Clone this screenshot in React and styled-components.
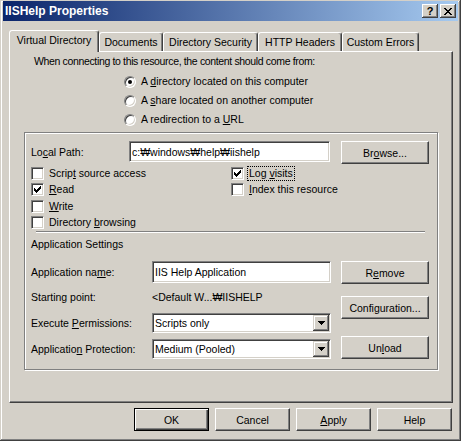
import React from 'react';
import styled, { createGlobalStyle } from 'styled-components';

const face = '#d4d0c8';
const light = '#ffffff';
const shadow = '#808080';
const dark = '#404040';

const GlobalStyle = createGlobalStyle`
  * { box-sizing: border-box; }
  html, body { margin: 0; padding: 0; background: ${face}; }
  body {
    font-family: "Liberation Sans", Arial, sans-serif;
    font-size: 10.5px;
    color: #000;
  }
`;

const Window = styled.div`
  width: 461px;
  height: 441px;
  padding: 1px 3px 3px;
  background: ${face};
  box-shadow: inset -1px -1px ${dark}, inset 1px 1px ${face}, inset -2px -2px ${shadow}, inset 2px 2px ${light};
  display: flex;
  flex-direction: column;
`;

const TitleBar = styled.div`
  height: 20px;
  display: flex;
  align-items: center;
  padding: 0 2px;
  background: linear-gradient(to right, #0a246a, #a6caf0);
  color: #fff;
  font-weight: bold;
  font-size: 12px;
`;

const TitleText = styled.span`
  flex: 1;
`;

const CaptionButton = styled.div`
  width: 16px;
  height: 14px;
  margin-left: 2px;
  background: ${face};
  box-shadow: inset -1px -1px ${dark}, inset 1px 1px ${light}, inset -2px -2px ${shadow};
  display: flex;
  align-items: center;
  justify-content: center;
  color: #000;
  font-weight: bold;
  font-size: 11px;
  line-height: 12px;
`;

const Body = styled.div`
  flex: 1;
  display: flex;
  flex-direction: column;
  padding: 9px 5px 0 6px;
`;

const TabStrip = styled.div`
  display: flex;
  align-items: flex-end;
  height: 21px;
`;

const Tab = styled.div`
  position: relative;
  z-index: ${(p) => (p.$active ? 1 : 0)};
  width: ${(p) => p.$w}px;
  height: ${(p) => (p.$active ? 22 : 19)}px;
  margin-bottom: ${(p) => (p.$active ? -1 : 0)}px;
  padding-bottom: ${(p) => (p.$active ? 3 : 0)}px;
  background: ${face};
  border: 1px solid;
  border-bottom: none;
  border-color: ${light} ${dark} transparent ${light};
  border-radius: 3px 3px 0 0;
  box-shadow: inset -1px 0 ${shadow};
  display: flex;
  align-items: center;
  justify-content: center;
  white-space: nowrap;
`;

const Panel = styled.div`
  height: 352px;
  padding-top: 3px;
  border: 1px solid;
  border-color: ${light} ${dark} ${dark} ${light};
  box-shadow: inset -1px -1px ${shadow};
  display: flex;
  flex-direction: column;
`;

const Intro = styled.div`
  margin-left: 24px;
  line-height: 13px;
  letter-spacing: -0.35px;
`;

const RadioList = styled.div`
  margin: 4px 0 0 114px;
`;

const OptionRow = styled.label`
  height: ${(p) => p.$h}px;
  display: flex;
  align-items: center;
  gap: 5px;
  white-space: nowrap;
`;

const RadioCircle = styled.span`
  flex: none;
  width: 12px;
  height: 12px;
  border-radius: 50%;
  background: #fff;
  border: 1px solid;
  border-color: ${shadow} ${light} ${light} ${shadow};
  box-shadow: inset 1px 1px ${dark}, inset -1px -1px ${face};
  display: flex;
  align-items: center;
  justify-content: center;
  &::after {
    content: '';
    display: ${(p) => (p.$checked ? 'block' : 'none')};
    width: 4px;
    height: 4px;
    border-radius: 50%;
    background: #000;
  }
`;

const CheckBox = styled.span`
  flex: none;
  width: 13px;
  height: 13px;
  background: #fff;
  border: 1px solid;
  border-color: ${shadow} ${light} ${light} ${shadow};
  box-shadow: inset 1px 1px ${dark}, inset -1px -1px ${face};
  display: flex;
  align-items: center;
  justify-content: center;
`;

const OptionLabel = styled.span`
  line-height: 13px;
  ${(p) => p.$focus && `outline: 1px dotted #000; padding: 0 1px; margin-left: -1px;`}
`;

const GroupBox = styled.div`
  margin: 3px 14px 0 14px;
  padding: 8px 8px 10px 6px;
  border: 1px solid ${shadow};
  box-shadow: inset 1px 1px ${light}, 1px 1px ${light};
`;

const PathRow = styled.div`
  height: 23px;
  display: grid;
  grid-template-columns: 98px 201px 1fr;
  align-items: start;
`;

const FieldLabel = styled.span`
  line-height: ${(p) => p.$lh || 13}px;
  white-space: nowrap;
`;

const TextBox = styled.div`
  height: ${(p) => p.$h}px;
  padding: 0 2px;
  background: #fff;
  border: 1px solid;
  border-color: ${shadow} ${light} ${light} ${shadow};
  box-shadow: inset 1px 1px ${dark}, inset -1px -1px ${face};
  display: flex;
  align-items: center;
  white-space: nowrap;
  overflow: hidden;
`;

const Checks = styled.div`
  margin-top: 1px;
  display: grid;
  grid-template-columns: 200px 1fr;
`;

const CheckColumn = styled.div`
  display: flex;
  flex-direction: column;
`;

const Separator = styled.div`
  height: 2px;
  margin: 0 4px 0 5px;
  border-top: 1px solid ${shadow};
  border-bottom: 1px solid ${light};
`;

const SectionTitle = styled.div`
  margin-top: 5px;
  line-height: 13px;
`;

const Settings = styled.div`
  margin-top: 10px;
  display: flex;
  justify-content: space-between;
`;

const LeftColumn = styled.div`
  width: 300px;
  display: flex;
  flex-direction: column;
`;

const RightColumn = styled.div`
  width: 88px;
  display: flex;
  flex-direction: column;
`;

const FieldRow = styled.div`
  height: ${(p) => p.$h}px;
  margin-top: ${(p) => p.$mt || 0}px;
  display: grid;
  grid-template-columns: 121px 179px;
  align-items: center;
`;

const DropBox = styled(TextBox)`
  padding: 1px 1px 1px 2px;
  justify-content: space-between;
`;

const DropButton = styled.span`
  width: 16px;
  height: 16px;
  background: ${face};
  box-shadow: inset -1px -1px ${dark}, inset 1px 1px ${face}, inset -2px -2px ${shadow}, inset 2px 2px ${light};
  display: flex;
  align-items: center;
  justify-content: center;
`;

const Button = styled.div`
  width: ${(p) => p.$w}px;
  height: 23px;
  flex: none;
  margin-top: ${(p) => p.$mt || 0}px;
  justify-self: end;
  background: ${face};
  border: 1px solid;
  border-color: ${(p) => (p.$default ? '#000' : `${light} ${dark} ${dark} ${light}`)};
  box-shadow: ${(p) =>
    p.$default
      ? `inset 1px 1px ${light}, inset -1px -1px ${dark}, inset -2px -2px ${shadow}`
      : `inset -1px -1px ${shadow}`};
  display: flex;
  align-items: center;
  justify-content: center;
  white-space: nowrap;
`;

const ButtonBar = styled.div`
  margin-top: 5px;
  padding-right: 1px;
  display: flex;
  justify-content: flex-end;
  gap: 6px;
`;

const U = styled.span`
  text-decoration: underline;
`;

const CheckMark = () => (
  <svg width="7" height="7" viewBox="0 0 7 7" shapeRendering="crispEdges">
    <path d="M6 0h1v1h-1z M5 1h2v1h-2z M0 2h1v1h-1z M4 2h3v1h-3z M0 3h2v1h-2z M3 3h3v1h-3z M0 4h5v1h-5z M1 5h3v1h-3z M2 6h1v1h-1z" fill="#000" />
  </svg>
);

const CloseGlyph = () => (
  <svg width="8" height="7" viewBox="0 0 8 7" shapeRendering="crispEdges">
    <path d="M0 0h2v1h-2z M6 0h2v1h-2z M1 1h2v1h-2z M5 1h2v1h-2z M2 2h4v1h-4z M3 3h2v1h-2z M2 4h4v1h-4z M1 5h2v1h-2z M5 5h2v1h-2z M0 6h2v1h-2z M6 6h2v1h-2z" fill="#000" />
  </svg>
);

const ArrowGlyph = () => (
  <svg width="7" height="4" viewBox="0 0 7 4" shapeRendering="crispEdges">
    <path d="M0 0h7v1h-7z M1 1h5v1h-5z M2 2h3v1h-3z M3 3h1v1h-1z" fill="#000" />
  </svg>
);

const Radio = ({ checked, children }) => (
  <OptionRow $h={19}>
    <RadioCircle $checked={checked} />
    <OptionLabel>{children}</OptionLabel>
  </OptionRow>
);

const Check = ({ checked, focus, children }) => (
  <OptionRow $h={16.5}>
    <CheckBox>{checked && <CheckMark />}</CheckBox>
    <OptionLabel $focus={focus}>{children}</OptionLabel>
  </OptionRow>
);

const Dropdown = ({ children }) => (
  <DropBox $h={20}>
    <span>{children}</span>
    <DropButton>
      <ArrowGlyph />
    </DropButton>
  </DropBox>
);

const tabs = [
  { label: 'Virtual Directory', w: 90, active: true },
  { label: 'Documents', w: 64 },
  { label: 'Directory Security', w: 95 },
  { label: 'HTTP Headers', w: 84 },
  { label: 'Custom Errors', w: 77 },
];

export default function App() {
  return (
    <>
      <GlobalStyle />
      <Window>
        <TitleBar>
          <TitleText>IISHelp Properties</TitleText>
          <CaptionButton>?</CaptionButton>
          <CaptionButton>
            <CloseGlyph />
          </CaptionButton>
        </TitleBar>
        <Body>
          <TabStrip>
            {tabs.map((t) => (
              <Tab key={t.label} $w={t.w} $active={t.active}>
                {t.label}
              </Tab>
            ))}
          </TabStrip>
          <Panel>
            <Intro>When connecting to this resource, the content should come from:</Intro>
            <RadioList>
              <Radio checked>
                A <U>d</U>irectory located on this computer
              </Radio>
              <Radio>
                A <U>s</U>hare located on another computer
              </Radio>
              <Radio>
                A redirection to a <U>U</U>RL
              </Radio>
            </RadioList>
            <GroupBox>
              <PathRow>
                <FieldLabel $lh={23}>
                  Lo<U>c</U>al Path:
                </FieldLabel>
                <TextBox $h={21}>c:₩windows₩help₩iishelp</TextBox>
                <Button $w={88}>
                  Br<U>o</U>wse...
                </Button>
              </PathRow>
              <Checks>
                <CheckColumn>
                  <Check>
                    Scrip<U>t</U> source access
                  </Check>
                  <Check checked>
                    <U>R</U>ead
                  </Check>
                  <Check>
                    <U>W</U>rite
                  </Check>
                  <Check>
                    Directory <U>b</U>rowsing
                  </Check>
                </CheckColumn>
                <CheckColumn>
                  <Check checked focus>
                    Log <U>v</U>isits
                  </Check>
                  <Check>
                    <U>I</U>ndex this resource
                  </Check>
                </CheckColumn>
              </Checks>
              <Separator />
              <SectionTitle>Application Settings</SectionTitle>
              <Settings>
                <LeftColumn>
                  <FieldRow $h={22}>
                    <FieldLabel>
                      Application na<U>m</U>e:
                    </FieldLabel>
                    <TextBox $h={22}>IIS Help Application</TextBox>
                  </FieldRow>
                  <FieldRow $h={13} $mt={8}>
                    <FieldLabel>Starting point:</FieldLabel>
                    <FieldLabel>&lt;Default W...₩IISHELP</FieldLabel>
                  </FieldRow>
                  <FieldRow $h={20} $mt={9}>
                    <FieldLabel>
                      Execute <U>P</U>ermissions:
                    </FieldLabel>
                    <Dropdown>Scripts only</Dropdown>
                  </FieldRow>
                  <FieldRow $h={20} $mt={6}>
                    <FieldLabel>
                      Applicatio<U>n</U> Protection:
                    </FieldLabel>
                    <Dropdown>Medium (Pooled)</Dropdown>
                  </FieldRow>
                </LeftColumn>
                <RightColumn>
                  <Button $w={88}>
                    R<U>e</U>move
                  </Button>
                  <Button $w={88} $mt={12}>
                    Confi<U>g</U>uration...
                  </Button>
                  <Button $w={88} $mt={17}>
                    Un<U>l</U>oad
                  </Button>
                </RightColumn>
              </Settings>
            </GroupBox>
          </Panel>
          <ButtonBar>
            <Button $w={75} $default>
              OK
            </Button>
            <Button $w={75}>Cancel</Button>
            <Button $w={75}>
              <U>A</U>pply
            </Button>
            <Button $w={75}>Help</Button>
          </ButtonBar>
        </Body>
      </Window>
    </>
  );
}
